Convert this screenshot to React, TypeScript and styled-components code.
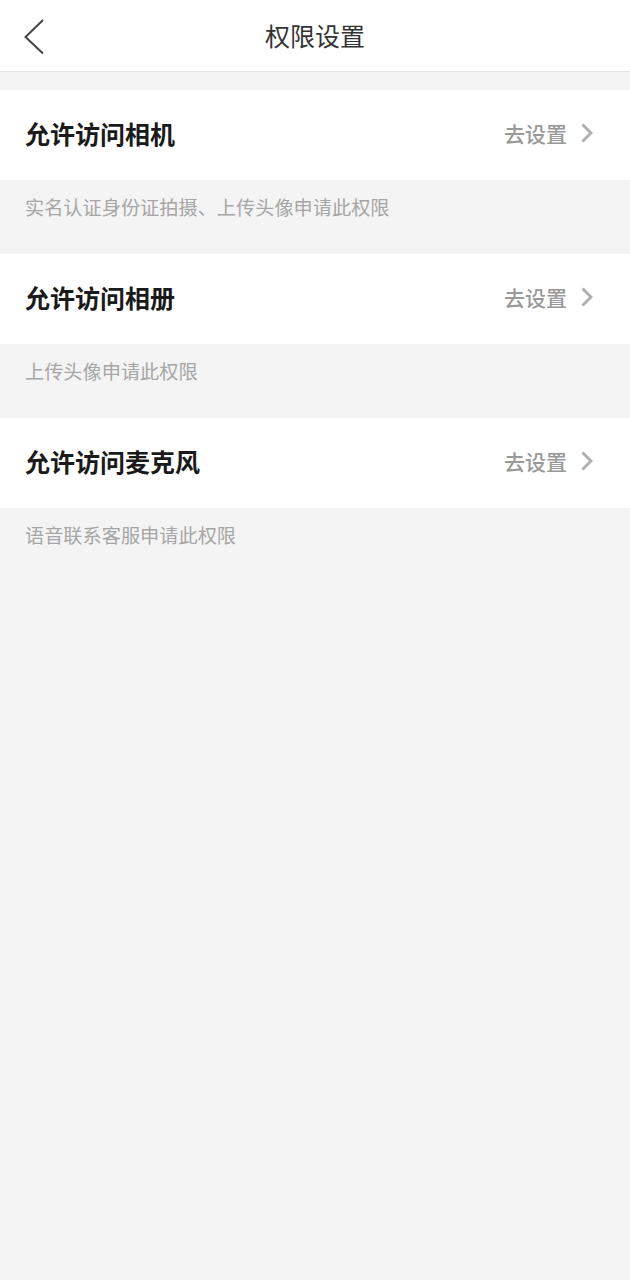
import React from "react";
import styled, { createGlobalStyle } from "styled-components";

const GlobalStyle = createGlobalStyle`
  html, body {
    margin: 0;
    padding: 0;
    background-color: #f4f4f4;
  }
  body {
    font-family: "Noto Sans CJK SC", "Noto Sans", sans-serif;
  }
`;

const Page = styled.div`
  width: 630px;
  min-height: 1280px;
  background-color: #f4f4f4;
`;

const NavBar = styled.header`
  position: relative;
  display: flex;
  align-items: center;
  justify-content: center;
  height: 71px;
  background-color: #fff;
  border-bottom: 1px solid #e6e6e6;
`;

const BackButton = styled.button`
  position: absolute;
  left: 20px;
  top: 16px;
  display: flex;
  padding: 0;
  border: none;
  background: none;
  cursor: pointer;
`;

const NavTitle = styled.h1`
  margin: 0;
  font-size: 25px;
  font-weight: 400;
  color: #333;
  line-height: 1;
`;

const List = styled.div`
  padding-top: 18px;
`;

const Row = styled.div`
  display: flex;
  align-items: center;
  justify-content: space-between;
  height: 90px;
  padding: 0 37px 4px 25px;
  box-sizing: border-box;
  background-color: #fff;
`;

const RowTitle = styled.span`
  font-size: 25px;
  font-weight: 700;
  color: #1a1a1a;
`;

const Action = styled.span`
  display: flex;
  align-items: center;
  gap: 14px;
  font-size: 21px;
  font-weight: 500;
  color: #999;
`;

const Note = styled.p`
  margin: 0;
  height: 74px;
  padding: 16px 25px 0;
  box-sizing: border-box;
  font-size: 19.2px;
  line-height: 22px;
  color: #a6a6a6;
`;

const permissions = [
  { title: "允许访问相机", note: "实名认证身份证拍摄、上传头像申请此权限" },
  { title: "允许访问相册", note: "上传头像申请此权限" },
  { title: "允许访问麦克风", note: "语音联系客服申请此权限" },
];

const App = () => {
  return (
    <Page>
      <GlobalStyle />
      <NavBar>
        <BackButton aria-label="返回">
          <svg width="26" height="40" viewBox="0 0 26 40">
            <path d="M23 4 L5.5 21 L23 37.5" fill="none" stroke="#444" strokeWidth="2" />
          </svg>
        </BackButton>
        <NavTitle>权限设置</NavTitle>
      </NavBar>
      <List>
        {permissions.map((p) => (
          <React.Fragment key={p.title}>
            <Row>
              <RowTitle>{p.title}</RowTitle>
              <Action>
                去设置
                <svg width="12" height="20" viewBox="0 0 12 20">
                  <path d="M1.5 1.5 L10 10 L1.5 18.5" fill="none" stroke="#b0b0b0" strokeWidth="3" />
                </svg>
              </Action>
            </Row>
            <Note>{p.note}</Note>
          </React.Fragment>
        ))}
      </List>
    </Page>
  );
};

export default App;
